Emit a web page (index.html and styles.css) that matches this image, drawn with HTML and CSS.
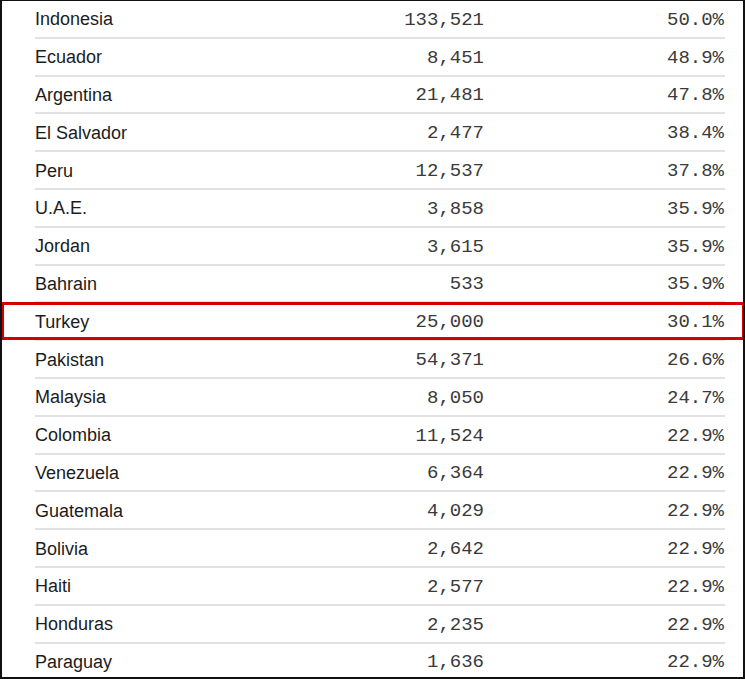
FILE: index.html
```html
<!DOCTYPE html>
<html>
<head>
<meta charset="utf-8">
<link rel="stylesheet" href="styles.css">
</head>
<body>
<div class="frame">
  <div class="table">
    <div class="row"><span class="name">Indonesia</span><span class="num">133,521</span><span class="pct">50.0%</span></div>
    <div class="row"><span class="name">Ecuador</span><span class="num">8,451</span><span class="pct">48.9%</span></div>
    <div class="row"><span class="name">Argentina</span><span class="num">21,481</span><span class="pct">47.8%</span></div>
    <div class="row"><span class="name">El Salvador</span><span class="num">2,477</span><span class="pct">38.4%</span></div>
    <div class="row"><span class="name">Peru</span><span class="num">12,537</span><span class="pct">37.8%</span></div>
    <div class="row"><span class="name">U.A.E.</span><span class="num">3,858</span><span class="pct">35.9%</span></div>
    <div class="row"><span class="name">Jordan</span><span class="num">3,615</span><span class="pct">35.9%</span></div>
    <div class="row"><span class="name">Bahrain</span><span class="num">533</span><span class="pct">35.9%</span></div>
    <div class="row highlight"><span class="name">Turkey</span><span class="num">25,000</span><span class="pct">30.1%</span></div>
    <div class="row"><span class="name">Pakistan</span><span class="num">54,371</span><span class="pct">26.6%</span></div>
    <div class="row"><span class="name">Malaysia</span><span class="num">8,050</span><span class="pct">24.7%</span></div>
    <div class="row"><span class="name">Colombia</span><span class="num">11,524</span><span class="pct">22.9%</span></div>
    <div class="row"><span class="name">Venezuela</span><span class="num">6,364</span><span class="pct">22.9%</span></div>
    <div class="row"><span class="name">Guatemala</span><span class="num">4,029</span><span class="pct">22.9%</span></div>
    <div class="row"><span class="name">Bolivia</span><span class="num">2,642</span><span class="pct">22.9%</span></div>
    <div class="row"><span class="name">Haiti</span><span class="num">2,577</span><span class="pct">22.9%</span></div>
    <div class="row"><span class="name">Honduras</span><span class="num">2,235</span><span class="pct">22.9%</span></div>
    <div class="row"><span class="name">Paraguay</span><span class="num">1,636</span><span class="pct">22.9%</span></div>
  </div>
</div>
</body>
</html>
```
FILE: styles.css
```css
html, body {
  margin: 0;
  padding: 0;
  background: #fff;
}
.frame {
  position: relative;
  box-sizing: border-box;
  width: 745px;
  height: 679px;
  border: 2px solid #111;
  border-top-width: 1px;
  overflow: hidden;
  background: #fff;
}
.table {
  display: flex;
  flex-direction: column;
  margin: 0 18px 0 33px;
}
.row {
  position: relative;
  box-sizing: border-box;
  height: 37.8px;
  flex: none;
  display: grid;
  grid-template-columns: 309px 140px 1fr;
  align-items: center;
  border-bottom: 2px solid #e2e2e2;
  padding-top: 2px;
}
.name {
  font-family: "Liberation Sans", Arial, sans-serif;
  font-size: 18px;
  color: #1c1c1c;
}
.num, .pct {
  font-family: "Liberation Mono", "Courier New", monospace;
  font-size: 19px;
  color: #3a3a3a;
  text-align: right;
}
.pct {
  padding-right: 1px;
}
.highlight::after {
  content: "";
  position: absolute;
  left: -34px;
  right: -20px;
  top: -1px;
  bottom: -1px;
  border: 3px solid #d40000;
}
```
